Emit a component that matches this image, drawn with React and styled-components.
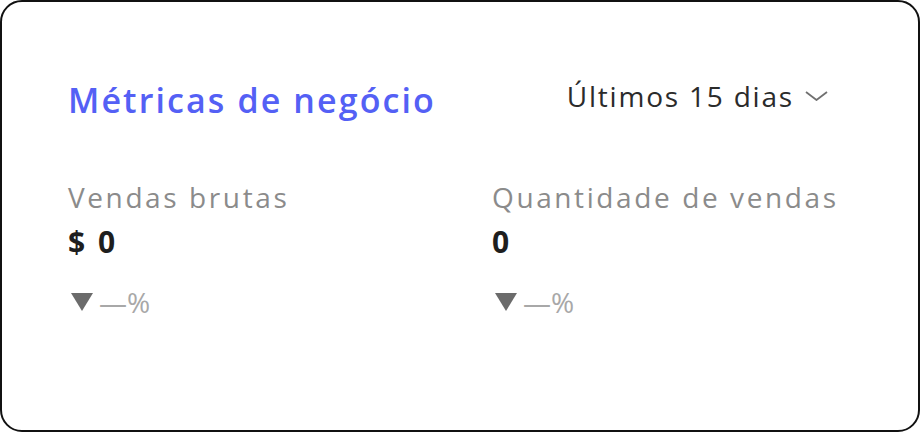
import styled, { createGlobalStyle } from "styled-components";

const GlobalStyles = createGlobalStyle`
  * { margin: 0; padding: 0; box-sizing: border-box; }
  body {
    background: #ffffff;
    font-family: "Open Sans", sans-serif;
  }
`;

const Card = styled.section`
  width: 920px;
  height: 432px;
  border: 2px solid #111;
  border-radius: 22px;
  background: #fff;
  padding: 78px 90px 0 66px;
  display: flex;
  flex-direction: column;
`;

const Header = styled.header`
  display: flex;
  align-items: flex-start;
  justify-content: space-between;
  height: 40px;
`;

const Title = styled.h2`
  font-size: 34px;
  line-height: 40px;
  font-weight: 600;
  color: #5460f5;
  letter-spacing: 2.1px;
`;

const Period = styled.button`
  display: flex;
  align-items: center;
  gap: 11px;
  border: none;
  background: none;
  font-family: "Open Sans", sans-serif;
  font-size: 28px;
  line-height: 32px;
  font-weight: 400;
  color: #2b2b2b;
  letter-spacing: 1.8px;
`;

const Metrics = styled.div`
  display: grid;
  grid-template-columns: 424px 1fr;
  margin-top: 60px;
`;

const Metric = styled.div`
  display: flex;
  flex-direction: column;
`;

const Label = styled.span`
  font-size: 28px;
  line-height: 34px;
  color: #8b8b8b;
  letter-spacing: 2.6px;
  white-space: nowrap;
`;

const Value = styled.span`
  font-size: 30px;
  line-height: 34px;
  font-weight: 700;
  color: #1e1e1e;
  letter-spacing: 2.5px;
  margin-top: 11px;
`;

const Delta = styled.span`
  display: flex;
  align-items: center;
  gap: 6px;
  margin-top: 28px;
  font-size: 28px;
  line-height: 30px;
  color: #a8a8a8;
`;

const Arrow = styled.span`
  width: 0;
  height: 0;
  border-left: 11px solid transparent;
  border-right: 11px solid transparent;
  border-top: 18px solid #6b6b6b;
  margin-left: 3px;
`;

function Chevron() {
  return (
    <svg width="23" height="10" viewBox="0 0 23 10" fill="none">
      <path d="M1 1l10.5 8L22 1" stroke="#707070" strokeWidth="1.8" />
    </svg>
  );
}

const metrics = [
  { label: "Vendas brutas", value: "$ 0" },
  { label: "Quantidade de vendas", value: "0" },
];

export default function App() {
  return (
    <>
      <GlobalStyles />
      <Card>
        <Header>
          <Title>Métricas de negócio</Title>
          <Period>
            Últimos 15 dias
            <Chevron />
          </Period>
        </Header>
        <Metrics>
          {metrics.map((m) => (
            <Metric key={m.label}>
              <Label>{m.label}</Label>
              <Value>{m.value}</Value>
              <Delta>
                <Arrow />
                —%
              </Delta>
            </Metric>
          ))}
        </Metrics>
      </Card>
    </>
  );
}
